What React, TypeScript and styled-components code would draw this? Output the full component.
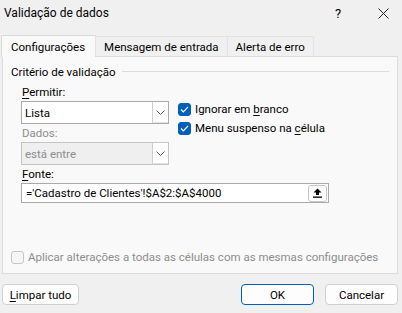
import React from "react";
import styled, { createGlobalStyle } from "styled-components";

const Global = createGlobalStyle`
  html, body {
    margin: 0;
    padding: 0;
    background: #f0f0f0;
  }
  body {
    font-family: Roboto, "Liberation Sans", sans-serif;
    font-size: 11.5px;
    color: #000;
  }
`;

const Dialog = styled.div`
  width: 402px;
  height: 313px;
  display: flex;
  flex-direction: column;
  background: #f0f0f0;
  overflow: hidden;
`;

const TitleBar = styled.div`
  height: 28px;
  display: flex;
  align-items: center;
  padding-left: 4px;
  margin-top: -1px;
`;

const Title = styled.span`
  flex: 1;
  font-size: 12px;
`;

const TitleButton = styled.div<{ $width: number }>`
  width: ${(p) => p.$width}px;
  height: 28px;
  display: flex;
  align-items: center;
  justify-content: center;
  font-size: 13px;
`;

const Tabs = styled.div`
  display: flex;
  align-items: flex-end;
  height: 22px;
  margin-top: 7px;
  padding-left: 1px;
  position: relative;
  z-index: 1;
`;

const Tab = styled.div<{ $active?: boolean }>`
  height: ${(p) => (p.$active ? 22 : 20)}px;
  box-sizing: border-box;
  display: flex;
  align-items: center;
  padding: ${(p) => (p.$active ? "0 10px 0 9px" : "0 8px")};
  border: 1px solid ${(p) => (p.$active ? "#d9d9d9" : "#e3e3e3")};
  border-bottom: none;
  margin-left: ${(p) => (p.$active ? 0 : -1)}px;
  background: ${(p) => (p.$active ? "#f9f9f9" : "#f0f0f0")};
  margin-bottom: ${(p) => (p.$active ? -1 : 0)}px;
  padding-top: ${(p) => (p.$active ? 0 : 1)}px;
`;

const Panel = styled.div`
  margin: 0 4px 0 2px;
  height: 218px;
  box-sizing: border-box;
  border: 1px solid #dcdcdc;
  background: #f9f9f9;
  padding: 7px 6px 0 8px;
  display: flex;
  flex-direction: column;
`;

const Legend = styled.div`
  display: flex;
  align-items: center;
  gap: 6px;
  height: 16px;
  margin-right: 2px;
  &::after {
    content: "";
    flex: 1;
    height: 1px;
    background: #dcdcdc;
    margin-top: -1px;
  }
`;

const Criteria = styled.div`
  display: grid;
  grid-template-columns: 148px 1fr;
  column-gap: 9px;
  padding-left: 10px;
  margin-top: 4px;
`;

const Field = styled.div<{ $indent?: number }>`
  display: flex;
  flex-direction: column;
  padding-left: ${(p) => p.$indent ?? 0}px;
`;

const Label = styled.div<{ $disabled?: boolean }>`
  height: 16px;
  line-height: 16px;
  margin: 0 0 1px 1px;
  color: ${(p) => (p.$disabled ? "#8d8d8d" : "#000")};
`;

const Key = styled.span`
  text-decoration: underline;
  text-underline-offset: 2px;
`;

const Select = styled.div<{ $disabled?: boolean }>`
  height: 23px;
  box-sizing: border-box;
  border: 1px solid ${(p) => (p.$disabled ? "#c4c4c4" : "#a9a9a9")};
  background: ${(p) => (p.$disabled ? "#efefef" : "#fff")};
  color: ${(p) => (p.$disabled ? "#8d8d8d" : "#000")};
  display: flex;
  align-items: center;
  padding-left: 3px;
  margin-bottom: 1px;
`;

const SelectText = styled.span`
  flex: 1;
`;

const Arrow = styled.div`
  width: 16px;
  height: 21px;
  box-sizing: border-box;
  border-left: 1px solid #cfcfcf;
  border-bottom: 1px solid #e2e2e2;
  background: #fff;
  display: flex;
  align-items: center;
  justify-content: center;
`;

const Checks = styled.div`
  display: flex;
  flex-direction: column;
  gap: 5px;
  padding-top: 18px;
`;

const CheckRow = styled.div<{ $disabled?: boolean }>`
  display: flex;
  align-items: center;
  gap: 4px;
  height: 14px;
  white-space: nowrap;
  color: ${(p) => (p.$disabled ? "#8d8d8d" : "#000")};
`;

const Box = styled.div<{ $checked?: boolean }>`
  width: 13px;
  height: 13px;
  flex: none;
  box-sizing: border-box;
  border-radius: 3px;
  background: ${(p) => (p.$checked ? "#005fb8" : "#f5f5f5")};
  border: 1px solid ${(p) => (p.$checked ? "#005fb8" : "#c6c6c6")};
  display: flex;
  align-items: center;
  justify-content: center;
`;

const SourceInput = styled.div`
  width: 308px;
  height: 20px;
  box-sizing: border-box;
  border: 1px solid #a9a9a9;
  background: #fff;
  display: flex;
  align-items: center;
  padding-left: 4px;
`;

const UploadButton = styled.div`
  width: 19px;
  height: 17px;
  box-sizing: border-box;
  border: 1px solid #c8c8c8;
  border-radius: 3px;
  background: #fdfdfd;
  display: flex;
  align-items: center;
  justify-content: center;
  margin-right: 1px;
`;

const ApplyAll = styled.div`
  margin-top: auto;
  margin-bottom: 9px;
`;

const Footer = styled.div`
  display: flex;
  align-items: center;
  padding: 10px 4px 0 2px;
  gap: 11px;
`;

const Button = styled.div<{ $primary?: boolean; $width: number }>`
  width: ${(p) => p.$width}px;
  height: 21px;
  box-sizing: border-box;
  border: 1px solid ${(p) => (p.$primary ? "#005fb8" : "#d0d0d0")};
  border-radius: 4px;
  background: #fdfdfd;
  display: flex;
  align-items: center;
  justify-content: center;
`;

const Spacer = styled.div`
  flex: 1;
`;

const Chevron = () => (
  <svg width="9" height="5" viewBox="0 0 9 5">
    <path d="M0.5 0.5 L4.5 4.5 L8.5 0.5" fill="none" stroke="#555" strokeWidth="1" />
  </svg>
);

const Tick = () => (
  <svg width="9" height="7" viewBox="0 0 9 7">
    <path d="M1 3.5 L3.3 5.8 L8 1" fill="none" stroke="#fff" strokeWidth="1.2" />
  </svg>
);

const Check = ({
  checked,
  disabled,
  children,
}: {
  checked?: boolean;
  disabled?: boolean;
  children: React.ReactNode;
}) => (
  <CheckRow $disabled={disabled}>
    <Box $checked={checked}>{checked && <Tick />}</Box>
    <span>{children}</span>
  </CheckRow>
);

export default function App() {
  return (
    <Dialog>
      <Global />
      <TitleBar>
        <Title>Validação de dados</Title>
        <TitleButton $width={52}>?</TitleButton>
        <TitleButton $width={38}>
          <svg width="11" height="11" viewBox="0 0 11 11">
            <path d="M0.5 0.5 L10.5 10.5 M10.5 0.5 L0.5 10.5" stroke="#222" strokeWidth="1" />
          </svg>
        </TitleButton>
      </TitleBar>
      <Tabs>
        <Tab $active>Configurações</Tab>
        <Tab>Mensagem de entrada</Tab>
        <Tab>Alerta de erro</Tab>
      </Tabs>
      <Panel>
        <Legend>Critério de validação</Legend>
        <Criteria>
          <Field>
            <Label>
              <Key>P</Key>ermitir:
            </Label>
            <Select>
              <SelectText>Lista</SelectText>
              <Arrow>
                <Chevron />
              </Arrow>
            </Select>
            <Label $disabled>Dados:</Label>
            <Select $disabled>
              <SelectText>está entre</SelectText>
              <Arrow>
                <Chevron />
              </Arrow>
            </Select>
          </Field>
          <Checks>
            <Check checked>
              Ignorar em <Key>b</Key>ranco
            </Check>
            <Check checked>
              Menu suspenso na <Key>c</Key>élula
            </Check>
          </Checks>
        </Criteria>
        <Field $indent={10}>
          <Label>
            <Key>F</Key>onte:
          </Label>
          <SourceInput>
            <SelectText>='Cadastro de Clientes'!$A$2:$A$4000</SelectText>
            <UploadButton>
              <svg width="9" height="10" viewBox="0 0 9 10">
                <path d="M4.5 0.5 L8.5 4.5 L6 4.5 L6 7 L3 7 L3 4.5 L0.5 4.5 Z" fill="#000" />
                <rect x="0" y="8.5" width="9" height="1.3" fill="#000" />
              </svg>
            </UploadButton>
          </SourceInput>
        </Field>
        <ApplyAll>
          <Check disabled>
            Aplicar alterações a todas as células com as mesmas configurações
          </Check>
        </ApplyAll>
      </Panel>
      <Footer>
        <Button $width={77}>
          <span>
            <Key>L</Key>impar tudo
          </span>
        </Button>
        <Spacer />
        <Button $primary $width={73}>OK</Button>
        <Button $width={73}>Cancelar</Button>
      </Footer>
    </Dialog>
  );
}
